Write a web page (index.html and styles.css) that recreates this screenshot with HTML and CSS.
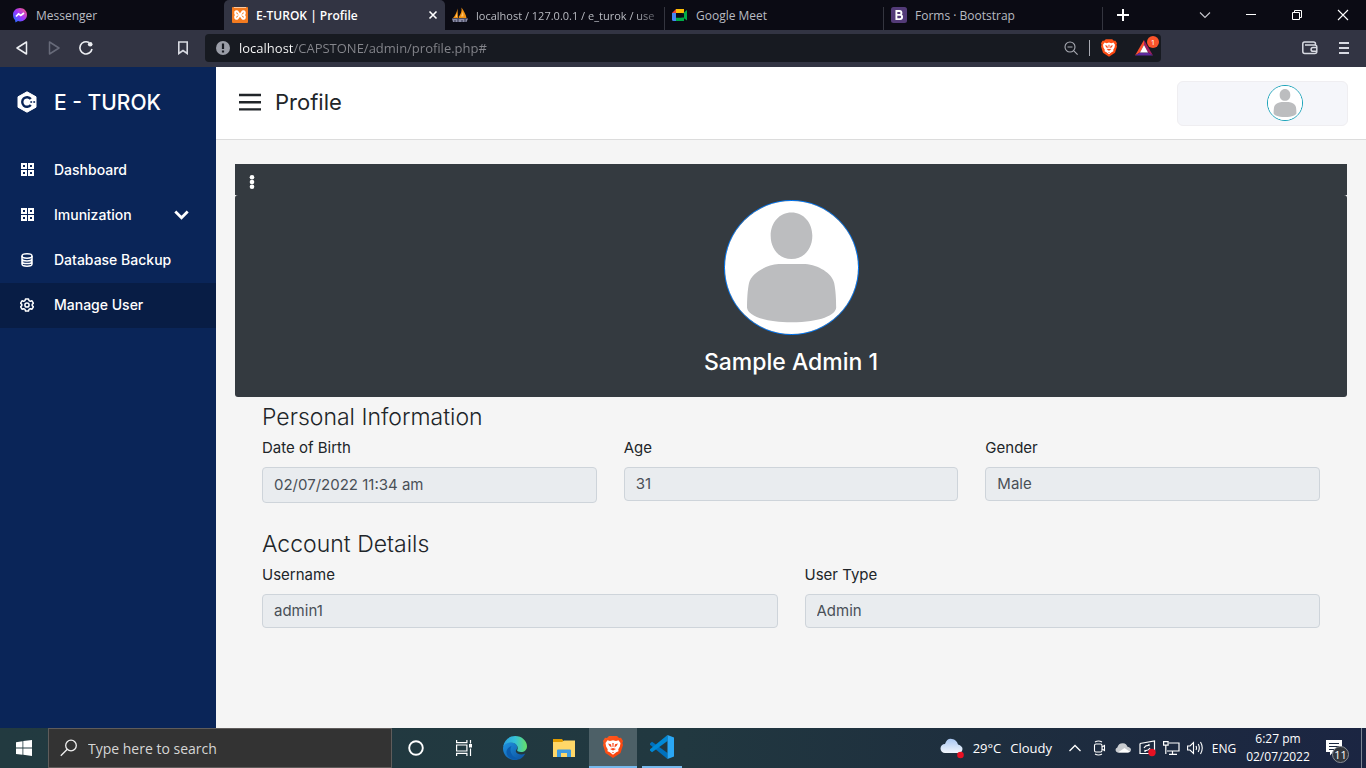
FILE: index.html
```html
<!DOCTYPE html>
<html lang="en">
<head>
<meta charset="utf-8">
<meta name="viewport" content="width=device-width, initial-scale=1">
<title>E-TUROK | Profile</title>
<link rel="stylesheet" href="styles.css">
</head>
<body>
<svg class="defs" width="0" height="0" aria-hidden="true">
  <defs>
    <linearGradient id="msgr" x1="0" y1="1" x2="1" y2="0"><stop offset="0" stop-color="#0a7cff"/><stop offset=".5" stop-color="#a033ff"/><stop offset="1" stop-color="#ff6070"/></linearGradient>
    <linearGradient id="lion-bg" x1="0" y1="0" x2="1" y2="1"><stop offset="0" stop-color="#ff5a1f"/><stop offset="1" stop-color="#f9400a"/></linearGradient>
    <linearGradient id="edge-top" x1="0" y1="0" x2="1" y2="0"><stop offset="0" stop-color="#2a9fe0"/><stop offset=".5" stop-color="#35c1d8"/><stop offset="1" stop-color="#66e066"/></linearGradient>
    <linearGradient id="edge-low" x1="0" y1="0" x2="1" y2="1"><stop offset="0" stop-color="#1f93e0"/><stop offset="1" stop-color="#0c4f9e"/></linearGradient>
    <linearGradient id="cloud-bg" x1="0" y1="0" x2="0" y2="1"><stop offset="0" stop-color="#a9c7f2"/><stop offset="1" stop-color="#f1f6fc"/></linearGradient>
    <symbol id="lion" viewBox="0 0 20 22">
      <path fill="url(#lion-bg)" d="M6 0h8l2 2 2-.2L20 5l-.6 2L20 9l-2.500 8L10 22l-7.500-5L0 9l.6-2L0 5l2-3.200L4 2z"/>
      <path fill="#fff" d="M4.500 4.200 7 5l3-.8 3 .8 2.500-.8L17.500 7l-.6 3.500-1.600 2.700.2 2-2.300 1L10 18.800 6.800 16.200l-2.300-1 .2-2-1.600-2.700L2.500 7z"/>
      <path fill="#f9471a" d="M5 7.500l3 .7.600 3.300L6.500 10zM15 7.500l-3 .7-.6 3.300 2.100-1.500zM9.300 7h1.400l-.3 4h-.8zM7 13l3-1 3 1-3 1.500zM9 16h2l-1 1.200z"/>
    </symbol>
    <symbol id="person" viewBox="0 0 134 134">
      <rect width="134" height="134" fill="#fff"/>
      <path fill="#bcbdbf" d="M67 11.500c12 0 21 10 21 23.500S79 58.500 67 58.500 46 48.500 46 35s9-23.500 21-23.500zM54 63.500h27c13 1 26.500 9 29 19 1.500 7 2 17 2 25-.5 7-15.500 14.700-45 14.700s-44.300-7.700-44.800-14.700c0-8 .5-18 2-25 2.500-10 16.800-18 29.800-19z"/>
    </symbol>
    <symbol id="grid" viewBox="0 0 13 13">
      <path fill="#fff" fill-rule="evenodd" d="M0 0h6v6H0zM2 2v2h2V2zM7 0h6v6H7zM9 2v2h2V2zM0 7h6v6H0zM2 9v2h2V9zM7 7h6v6H7zM9 9v2h2V9z"/>
    </symbol>
  </defs>
</svg>

<header class="browser">
  <div class="tabs">
    <a class="tab" href="#messenger">
      <svg width="16" height="16" viewBox="0 0 16 16"><path fill="url(#msgr)" d="M8 1c4 0 7 2.900 7 6.700s-3 6.700-7 6.700c-.7 0-1.400-.1-2-.3L3.500 15.500 3 13C1.700 11.700 1 9.800 1 7.700 1 3.900 4 1 8 1z"/><path fill="none" stroke="#fff" stroke-width="1.700" d="m4 9.500 2.500-2.700 2.300 1.700L12 6"/></svg>
      <span class="tab-title">Messenger</span>
    </a>
    <div class="tab tab-active">
      <svg width="16" height="16" viewBox="0 0 16 16"><rect width="16" height="16" rx="1" fill="#f47b20"/><path fill="#fbc9a0" d="M2 0h12v1H2z"/><path fill="none" stroke="#fff" stroke-width="2" d="M3 5.200Q4 4 5.500 4.500L10.500 11.500Q12 12.300 12.700 11 13.300 9 11.300 8 13.300 7 12.600 5 12 3.800 10.500 4.500L5.500 11.500Q4 12.300 3.300 11 2.700 9 4.700 8 2.700 7 3.400 5"/></svg>
      <span class="tab-title">E-TUROK | Profile</span>
      <button class="plain" aria-label="Close tab"><svg width="10" height="10" viewBox="0 0 10 10"><path stroke="#fff" stroke-width="1.600" d="m1.500 1.500 7 7m0-7-7 7"/></svg></button>
    </div>
    <a class="tab tab-fade" href="#pma">
      <svg width="16" height="16" viewBox="0 0 16 16"><path fill="#f29111" d="M1 11C3 9 5 5 5.500 1.500L6 11zM6.500 10C9 7 10 4 9.500.5 12 4 14 8 14.500 11L7 11z"/><path fill="#ffc46b" d="M3.500 10 5 6v4zM9 9.500l2-5 .5 5z"/><path fill="#8b8ca5" d="M0 11.500h16L14.500 15H1z"/><path stroke="#30324a" d="M3 15v-2m3 2v-3m4 3v-2m3 2v-3"/></svg>
      <span class="tab-title">localhost / 127.0.0.1 / e_turok / use</span>
    </a>
    <a class="tab tab-ruled" href="#meet">
      <svg width="16" height="16" viewBox="0 0 16 16"><path fill="#fbbc04" d="M4 2h8v4H4z"/><path fill="#ea4335" d="M4 2v4H0z"/><path fill="#4285f4" d="M0 6h4v8H1.500Q0 14 0 12.500z"/><path fill="#00ac47" d="M4 10.500h8V14H4zM9 8l6-5v10.500l-3-2.300V6z"/><path fill="#0b0b14" d="M4 6h5.500v4.500H4z"/></svg>
      <span class="tab-title">Google Meet</span>
    </a>
    <a class="tab tab-ruled" href="#forms">
      <svg width="16" height="16" viewBox="0 0 16 16"><rect width="16" height="16" rx="2.500" fill="#533b78"/><path fill="none" stroke="#fff" stroke-width="1.900" d="M5.400 4H8.500a1.900 1.900 0 0 1 0 3.900H5.400zM5.400 7.900H9a2.100 2.100 0 0 1 0 4.200H5.400z"/></svg>
      <span class="tab-title">Forms · Bootstrap</span>
    </a>
    <button class="plain new-tab tab-ruled" aria-label="New tab"><svg width="14" height="14" viewBox="0 0 14 14"><path stroke="#fff" stroke-width="2" d="M7 1v12M1 7h12"/></svg></button>
    <div class="window-buttons">
      <button class="plain" aria-label="Search tabs"><svg width="12" height="12" viewBox="0 0 12 12"><path fill="none" stroke="#c9c9d0" stroke-width="1.100" d="m1 3.500 5 5 5-5"/></svg></button>
      <button class="plain" aria-label="Minimize"><svg width="12" height="12" viewBox="0 0 12 12"><path stroke="#fff" d="M1 5.500h10"/></svg></button>
      <button class="plain" aria-label="Restore"><svg width="12" height="12" viewBox="0 0 12 12"><path fill="none" stroke="#fff" d="M1.500 3.500h7v7h-7zM3.500 3.500v-2h7v7h-2"/></svg></button>
      <button class="plain" aria-label="Close"><svg width="12" height="12" viewBox="0 0 12 12"><path stroke="#fff" stroke-width="1.100" d="m1 1 10 10m0-10L1 11"/></svg></button>
    </div>
  </div>
  <div class="toolbar">
    <div class="nav-buttons">
      <button class="plain" aria-label="Back"><svg width="14" height="14" viewBox="0 0 14 14"><path fill="none" stroke="#eceef2" stroke-width="1.500" stroke-linejoin="round" d="M11.500 1v12L2 7z"/></svg></button>
      <button class="plain" aria-label="Forward"><svg width="14" height="14" viewBox="0 0 14 14"><path fill="none" stroke="#676a79" stroke-width="1.500" stroke-linejoin="round" d="M2.500 1v12L12 7z"/></svg></button>
      <button class="plain" aria-label="Reload"><svg width="16" height="16" viewBox="0 0 16 16"><path fill="none" stroke="#eceef2" stroke-width="1.600" d="M11 2.500A6.100 6.100 0 1 0 14 9"/><circle cx="12.200" cy="4.300" r="2.300" fill="#eceef2"/></svg></button>
    </div>
    <button class="plain bookmark" aria-label="Bookmark"><svg width="12" height="14" viewBox="0 0 12 14"><path fill="none" stroke="#d8dae2" stroke-width="1.600" d="M1.800 1h8.400v11.500L6 9.500l-4.200 3z"/></svg></button>
    <div class="address">
      <svg width="14" height="14" viewBox="0 0 14 14"><circle cx="7" cy="7" r="7" fill="#9a9da7"/><path fill="#171a21" d="M5.900 2.500h2.200v5.500H5.900zM5.900 9.500h2.200v2H5.900z"/></svg>
      <input class="address-input" aria-label="Address" value="localhost/CAPSTONE/admin/profile.php#">
      <svg width="14" height="14" viewBox="0 0 14 14"><g fill="none" stroke="#a9abb3" stroke-width="1.100"><circle cx="6" cy="6" r="5"/><path d="m9.600 9.600 4 4M3.500 6h5"/></g></svg>
      <span class="address-rule"></span>
      <svg width="16" height="18"><use href="#lion"/></svg>
      <span class="rewards">
        <svg width="18" height="16" viewBox="0 0 18 16"><path fill="#ff4f2e" d="M9 0 0 15.500 5 12.500 9 5z"/><path fill="#9e1f63" d="m9 0 9 15.500-5-3L9 5z"/><path fill="#5f2a9e" d="M0 15.500h18l-5-3H5z"/><path fill="#fff" d="m9 5 4 7.500H5z"/></svg>
        <span class="rewards-count">1</span>
      </span>
    </div>
    <div class="toolbar-end">
      <button class="plain" aria-label="Wallet"><svg width="16" height="14" viewBox="0 0 16 14"><g fill="none" stroke="#d8dae2" stroke-width="1.500"><path d="M13.500 4V3q0-2-2-2h-9Q.8 1 .8 3v7.500q0 2 2 2h10q2 0 2-2V6q0-2-2-2H3"/><path d="M15 6.500h-4a1.900 1.900 0 0 0 0 3.800h4"/></g></svg></button>
      <button class="plain" aria-label="Menu"><svg width="10" height="12" viewBox="0 0 10 12"><path stroke="#d8dae2" stroke-width="1.800" d="M0 1h10M0 6h10M0 11h10"/></svg></button>
    </div>
  </div>
</header>

<div class="app">
  <aside class="sidebar">
    <a class="brand" href="#home">
      <span class="side-icon"><svg width="20" height="22" viewBox="0 0 20 22"><path fill="#fff" stroke="#fff" stroke-linejoin="round" d="M10 .8 19 5.800v10.400l-9 5-9-5V5.800z"/><path fill="none" stroke="#0a2558" stroke-width="2.400" d="M13.800 8A4.800 4.800 0 1 0 13.800 14"/><path stroke="#0a2558" stroke-width=".9" d="M13.200 11h2m1 0h2M14.200 10v2m3-2v2"/></svg></span>
      <span class="brand-name">E - TUROK</span>
    </a>
    <nav class="side-nav">
      <a class="side-link" href="#dashboard"><span class="side-icon"><svg width="13" height="13"><use href="#grid"/></svg></span>Dashboard</a>
      <a class="side-link" href="#imunization"><span class="side-icon"><svg width="13" height="13"><use href="#grid"/></svg></span>Imunization
        <svg class="side-arrow" width="15" height="10" viewBox="0 0 15 10"><path fill="none" stroke="#fff" stroke-width="2.800" d="m1.300 1.500 6.200 6.200 6.200-6.200"/></svg></a>
      <a class="side-link" href="#backup"><span class="side-icon"><svg width="12" height="14" viewBox="0 0 12 14"><g fill="none" stroke="#fff" stroke-width="1.500"><ellipse cx="6" cy="3" rx="5" ry="2.200"/><path d="M1 3v8c0 1.300 2.200 2.200 5 2.200s5-.9 5-2.200V3M1 5.800C1 7 3.200 7.900 6 7.900s5-.9 5-2.100M1 8.500c0 1.200 2.200 2.100 5 2.100s5-.9 5-2.100"/></g></svg></span>Database Backup</a>
      <a class="side-link side-link-active" href="#users"><span class="side-icon"><svg width="14" height="14" viewBox="0 0 14 14"><g fill="none" stroke="#fff" stroke-width="1.500" stroke-linejoin="round"><path d="M5.500.9h3L9 2.600l1.300.7 1.700-.5 1.400 2.400L12.200 6.400v1.200l1.200 1.200L12 11.200l-1.700-.5-1.300.7-.5 1.700h-3L5 11.400l-1.300-.7-1.700.5L.6 8.800l1.200-1.200V6.400L.6 5.200 2 2.800l1.700.5L5 2.600z"/><circle cx="7" cy="7" r="2.100"/></g></svg></span>Manage User</a>
    </nav>
  </aside>

  <div class="page">
    <div class="page-header">
      <button class="plain menu-toggle" aria-label="Toggle menu"><svg width="22" height="18" viewBox="0 0 22 18"><path stroke="#212529" stroke-width="2.400" d="M0 2h22M0 9.200h22M0 16.400h22"/></svg></button>
      <h1 class="page-title">Profile</h1>
      <button class="account" aria-label="Account"><svg class="avatar avatar-small" viewBox="0 0 134 134"><use href="#person"/></svg></button>
    </div>
    <main class="content">
      <section class="profile">
        <div class="profile-menu"><button class="plain" aria-label="Options"><svg width="6" height="14" viewBox="0 0 6 14"><g fill="#fff"><circle cx="3" cy="2.300" r="2.300"/><circle cx="3" cy="7" r="2.300"/><circle cx="3" cy="11.700" r="2.300"/></g></svg></button></div>
        <div class="profile-card">
          <svg class="avatar avatar-large" viewBox="0 0 134 134"><use href="#person"/></svg>
          <h2 class="profile-name">Sample Admin 1</h2>
        </div>
      </section>
      <form class="details">
        <h3 class="group-title">Personal Information</h3>
        <div class="fields fields-three">
          <div><label for="dob">Date of Birth</label><input class="field field-date" id="dob" value="02/07/2022 11:34 am" readonly></div>
          <div><label for="age">Age</label><input class="field" id="age" value="31" readonly></div>
          <div><label for="gender">Gender</label><input class="field" id="gender" value="Male" readonly></div>
        </div>
        <h3 class="group-title">Account Details</h3>
        <div class="fields fields-two">
          <div><label for="username">Username</label><input class="field" id="username" value="admin1" readonly></div>
          <div><label for="usertype">User Type</label><input class="field" id="usertype" value="Admin" readonly></div>
        </div>
      </form>
    </main>
  </div>
</div>

<footer class="taskbar">
  <button class="plain task" aria-label="Start"><svg width="16" height="16" viewBox="0 0 16 16"><path fill="#fff" d="M0 2.200 6.500 1.200v6.300H0zM7.300 1.100 16 0v7.500H7.300zM0 8.400h6.500v6.400L0 13.900zM7.300 8.400H16V16l-8.700-1.200z"/></svg></button>
  <div class="search">
    <svg width="18" height="18" viewBox="0 0 18 18"><g fill="none" stroke="#f0f0f0" stroke-width="1.300"><circle cx="11" cy="6.500" r="5.300"/><path d="M7.300 10.300.8 16.800"/></g></svg>
    <input class="search-input" aria-label="Search" placeholder="Type here to search">
  </div>
  <div class="tasks">
    <button class="plain task" aria-label="Cortana"><svg width="16" height="16" viewBox="0 0 16 16"><circle cx="8" cy="8" r="6.800" fill="none" stroke="#fff" stroke-width="1.900"/></svg></button>
    <button class="plain task" aria-label="Task view"><svg width="16" height="16" viewBox="0 0 16 16"><path fill="none" stroke="#fff" stroke-width="1.200" d="M.6 0v2.600h10.300V0M.6 16v-2.600h10.300V16M.6 5h10.300v6H.6zM14.500 0v3.500m0 5V16"/><path fill="#fff" d="M13 4h3v3.500h-3z"/></svg></button>
  </div>
  <div class="tasks tasks-apps">
    <button class="plain task" aria-label="Edge"><svg width="24" height="24" viewBox="0 0 24 24"><path fill="url(#edge-low)" d="M.5 9.500C2 6 7 5 11 7c3 1.500 4 4 3 6-2 1.500-1.500 3.500 1 4.800 2.500 1.200 5 .7 7.300-.3C20 22 16.500 24 12 24 5 24 0 19 0 12z"/><path fill="#0b5cad" d="M8.500 10C6 14 8 21 14.500 22.500 11 25 4 22 3.500 16.500c-.2-3 2-5.500 5-6.500z"/><path fill="url(#edge-top)" d="M.3 10.500C1 4.500 6 0 12.200 0 19 0 24 5 24 10.200c0 3.500-2.500 5.800-6 5.800-2.500 0-4.500-.8-3.700-2.300C16 11 13 6.500 8 6.500c-3.500 0-6.500 1.500-7.700 4z"/></svg></button>
    <button class="plain task" aria-label="File Explorer"><svg width="22" height="18" viewBox="0 0 22 18"><path fill="#e29c00" d="M0 0h9l1.500 2H22v3H0z"/><path fill="#ffd768" d="M0 3h9l2-1.500h11V18H0z"/><path fill="#3e9ae0" d="M4 18v-6.500q0-1 1-1h12q1 0 1 1V18h-4v-4H8v4z"/></svg></button>
    <button class="plain task task-active" aria-label="Brave"><svg width="20" height="24"><use href="#lion"/></svg></button>
    <button class="plain task task-open" aria-label="Visual Studio Code"><svg width="24" height="24" viewBox="0 0 24 24"><path fill="#0071bd" d="M0 8.500 2 6.800 17.500 18v6L0 9.800z"/><path fill="#0089d6" d="M0 15.500 2 17.200 17.500 6V0L0 14.200z"/><path fill="#2aa7f5" d="m17.500 0 6.500 2.500v19L17.500 24z"/></svg></button>
  </div>
  <div class="tray">
    <button class="plain weather">
      <svg width="24" height="21" viewBox="0 0 24 21"><path fill="url(#cloud-bg)" d="M5 15a4.500 4.500 0 0 1 0-9Q7 0 12 1q4.500.5 6 5.500Q22.500 8 22.500 11 22 15 18.500 15z"/><circle cx="20.500" cy="17" r="3.300" fill="#e81123"/></svg>
      <span>29°C</span><span>Cloudy</span>
    </button>
    <div class="tray-icons">
      <button class="plain" aria-label="Show hidden icons"><svg width="12" height="16" viewBox="0 0 12 16"><path fill="none" stroke="#fff" stroke-width="1.300" d="m.5 11 5.500-5.500 5.500 5.500"/></svg></button>
      <button class="plain" aria-label="Meet now"><svg width="14" height="16" viewBox="0 0 14 16"><g fill="none" stroke="#fff" stroke-width="1.100"><rect x="2.500" y="4" width="7.500" height="8" rx="1.500"/><path d="m10 7 2.500-1.500v5L10 9M3 2q3.500-2 7 0M3 14q3.500 2 7 0"/></g></svg></button>
      <button class="plain" aria-label="OneDrive"><svg width="16" height="16" viewBox="0 0 16 16"><path fill="#c9ccd0" d="M2.500 12.500A2.600 2.600 0 0 1 2.300 7.500Q3.500 3 8 3.200q3.500.3 4.500 3.600Q16 7.500 16 10q-.3 2.500-3 2.500z"/><path fill="#fff" d="M3 12.500 9.500 8l5.500 3.800-2 .7z"/></svg></button>
      <button class="plain" aria-label="Update"><svg width="17" height="18" viewBox="0 0 17 18"><path fill="none" stroke="#fff" stroke-width="1.200" d="M1 4.500 15.500 2v10M11 14.500H1v-10M5 9q1.500-3 5-2.500V5m1 4q-1.500 3-5 2.500V13"/><circle cx="13" cy="13.500" r="3.700" fill="#e81123"/></svg></button>
      <button class="plain" aria-label="Network"><svg width="17" height="16" viewBox="0 0 17 16"><path fill="none" stroke="#fff" stroke-width="1.200" d="M6 3h10v8H4M.6 1.600h4.500v3.500H.6zM2.800 5v9M9.500 11v3M6 14.400h8"/></svg></button>
      <button class="plain" aria-label="Volume"><svg width="17" height="16" viewBox="0 0 17 16"><path fill="none" stroke="#fff" stroke-width="1.100" d="M.6 6H3l3.500-3.500v11L3 10H.6zM9 6q1 2 0 4m2.200-6q2.200 4 0 8m2.300-10q3.500 6 0 12"/></svg></button>
    </div>
    <button class="plain language">ENG</button>
    <button class="plain clock"><span>6:27 pm</span><span>02/07/2022</span></button>
    <button class="plain notices" aria-label="Notifications"><svg width="16" height="16" viewBox="0 0 16 16"><path fill="#fff" d="M0 0h16v12H7l-3 3.500V12H0z"/><path stroke="#1b2840" stroke-width="1.200" d="M3 3.500h10M3 6.500h10M3 9.500h6"/></svg><span class="notice-count">11</span></button>
  </div>
</footer>
</body>
</html>
```
FILE: styles.css
```css
* {
  box-sizing: border-box;
}

body {
  display: flex;
  flex-direction: column;
  min-height: 100vh;
  margin: 0;
  background: #f5f5f5;
  color: #212529;
  font-family: Inter, sans-serif;
  font-size: 15px;
}

h1, h2, h3 {
  margin: 0;
}

a {
  color: inherit;
  text-decoration: none;
}

svg {
  display: block;
  flex: none;
}

.defs {
  position: absolute;
}

.plain {
  display: flex;
  align-items: center;
  justify-content: center;
  padding: 0;
  border: 0;
  background: none;
  color: inherit;
  font: inherit;
}

/* Browser frame */
.browser,
.taskbar {
  color: #fff;
  font-family: "Open Sans", "Noto Sans", sans-serif;
}

.tabs {
  display: flex;
  height: 30px;
  background: #0b0b14;
  font-size: 12px;
}

.tab {
  display: flex;
  flex: 0 1 219px;
  align-items: center;
  gap: 8px;
  min-width: 0;
  padding: 0 8px;
  color: #b9bbc2;
}

.tab:first-child {
  flex-basis: 224px;
  padding-left: 12px;
}

.tab-ruled {
  background: linear-gradient(#34353f, #34353f) left bottom / 1px 23px no-repeat;
}

.tab-title {
  flex: 1;
  white-space: nowrap;
}

.tab-fade {
  padding-left: 7px;
  font-size: 11px;
}

.tab-fade .tab-title {
  mask-image: linear-gradient(to right, #000 88%, #0006);
}

.tab-active {
  flex-basis: 221px;
  padding-right: 7px;
  border-radius: 5px 5px 0 0;
  background: #323443;
  color: #fff;
  font-weight: 600;
}

.new-tab {
  width: 42px;
}

.window-buttons {
  display: flex;
  margin-left: auto;
}

.window-buttons .plain {
  width: 46px;
}

.toolbar {
  display: flex;
  align-items: center;
  height: 37px;
  padding-bottom: 1px;
  background: #323443;
}

.nav-buttons {
  display: flex;
  padding-left: 6px;
}

.nav-buttons .plain {
  width: 32px;
}

.bookmark {
  width: 44px;
  margin-left: 59px;
}

.address {
  display: flex;
  flex: 1;
  align-items: center;
  gap: 11px;
  height: 28px;
  padding: 0 2px 0 11px;
  border-radius: 4px;
  background: #171a21;
}

.address-input {
  flex: 1;
  min-width: 0;
  margin-left: -2px;
  padding: 0;
  border: 0;
  background: linear-gradient(to right, #fff 55px, #85868c 55px);
  background-clip: text;
  color: transparent;
  font: 13px "Open Sans", sans-serif;
}

.address-rule {
  width: 1px;
  height: 16px;
  background: #a9abb3;
}

.rewards {
  position: relative;
  width: 31px;
  padding-left: 7px;
}

.rewards-count {
  position: absolute;
  top: -4px;
  right: 0;
  width: 12px;
  border-radius: 50%;
  background: #fb542b;
  font-size: 8px;
  line-height: 12px;
  text-align: center;
}

.toolbar-end {
  display: flex;
  width: 205px;
  justify-content: flex-end;
  gap: 21px;
  padding-right: 17px;
}

/* Application */
.app {
  display: flex;
  flex: 1;
}

.sidebar {
  width: 216px;
  background: #0a2558;
  color: #fff;
}

.brand {
  display: flex;
  align-items: center;
  height: 72px;
  padding-bottom: 2px;
}

.brand-name {
  font-size: 21px;
  font-weight: 500;
}

.side-icon {
  display: flex;
  justify-content: center;
  width: 54px;
}

.side-nav {
  padding-top: 9px;
}

.side-link {
  display: flex;
  align-items: center;
  height: 45px;
  padding-bottom: 2px;
  font-size: 14px;
  font-weight: 500;
}

.side-link-active {
  background: #081d45;
}

.side-arrow {
  margin: 0 27px 0 auto;
}

.page {
  flex: 1;
}

.page-header {
  display: flex;
  align-items: center;
  height: 73px;
  padding: 0 18px 0 23px;
  border-bottom: 1px solid #dcdcdc;
  background: #fff;
}

.menu-toggle,
.page-title {
  padding-bottom: 2px;
}

.page-title {
  flex: 1;
  margin-left: 14px;
  font-size: 22px;
  font-weight: 400;
}

.account {
  display: flex;
  justify-content: flex-end;
  width: 171px;
  padding: 3px 44px 4px;
  border: 1px solid #efeef1;
  border-radius: 6px;
  background: #f5f6fa;
}

.avatar {
  border: 1px solid #007bff;
  border-radius: 50%;
}

.avatar-small {
  width: 36px;
  height: 36px;
  border-color: #17a2b8;
}

.avatar-large {
  width: 135px;
  height: 135px;
}

.content {
  padding: 24px 19px;
}

.profile {
  color: #fff;
}

.profile-menu {
  height: 31px;
  padding: 11px 14px 0;
  background: #343a40;
}

.profile-card {
  display: flex;
  flex-direction: column;
  align-items: center;
  padding: 5px 0 20px;
  border-radius: 3px;
  background: #343a40;
}

.profile-name {
  margin-top: 12px;
  font-size: 23px;
  font-weight: 500;
  line-height: 30px;
}

.details {
  padding: 5px 27px;
}

.group-title {
  font-size: 23px;
  font-weight: 300;
  line-height: 30px;
}

.fields {
  display: grid;
  align-items: start;
  gap: 27px;
  margin-bottom: 26px;
}

.fields-three {
  grid-template-columns: repeat(3, 1fr);
}

.fields-two {
  grid-template-columns: repeat(2, 1fr);
}

.fields label {
  display: block;
  padding: 5px 0 8px;
  line-height: 22px;
}

.field {
  display: block;
  width: 100%;
  height: 34px;
  padding: 0 11px 2px;
  border: 1px solid #ced4da;
  border-radius: 4px;
  background: #e9ecef;
  color: #495057;
  font: 15px Inter, sans-serif;
}

.field-date {
  height: 36px;
}

/* Taskbar */
.taskbar {
  display: flex;
  height: 40px;
  background: linear-gradient(to right, #223a40, #213840 50%, #1e2e3e 72%, #1b2542);
}

.task {
  width: 48px;
}

.search {
  display: flex;
  flex: 0 1 344px;
  align-items: center;
  gap: 10px;
  padding: 0 11px;
  border: 1px solid #5f5c5b;
  background: #333;
}

.search-input {
  flex: 1;
  min-width: 0;
  padding: 0;
  border: 0;
  background: none;
  color: #fff;
  font: 14px "Open Sans", sans-serif;
}

.search-input::placeholder {
  color: #d6d6d6;
}

.tasks {
  display: flex;
}

.tasks-apps {
  gap: 1px;
  margin-left: 3px;
}

.task-active {
  border-bottom: 2px solid #76b9ed;
  background: #4d6067;
}

.task-open {
  width: 40px;
  margin-left: 4px;
  border-bottom: 2px solid #76b9ed;
}

.tray {
  display: flex;
  margin-left: auto;
  padding-right: 4px;
  font-size: 12px;
}

.weather {
  gap: 9px;
  font-size: 13px;
}

.tray-icons {
  display: flex;
  margin-left: 11px;
}

.tray-icons .plain {
  width: 24px;
}

.language {
  width: 34px;
}

.clock {
  flex-direction: column;
  width: 74px;
  line-height: 18px;
}

.notices {
  position: relative;
  width: 47px;
  padding-right: 9px;
  border-right: 1px solid #7d8694;
}

.notice-count {
  position: absolute;
  top: 18px;
  left: 17px;
  width: 17px;
  border: 1px solid #8a8f96;
  border-radius: 50%;
  background: #33373d;
  font-size: 11px;
  line-height: 15px;
}
```
